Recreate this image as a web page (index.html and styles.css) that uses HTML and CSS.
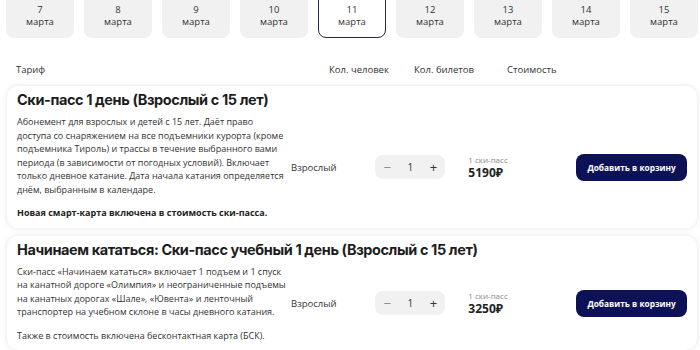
FILE: index.html
```html
<!DOCTYPE html>
<html lang="ru">
<head>
    <meta charset="UTF-8">
    <meta name="viewport" content="width=device-width, initial-scale=1.0">
    <title>Ски-пассы</title>
    <link rel="stylesheet" href="styles.css">
</head>
<body>
    <div class="page">
        <div class="dates">
            <div class="date"><span>7</span><span>марта</span></div>
            <div class="date"><span>8</span><span>марта</span></div>
            <div class="date"><span>9</span><span>марта</span></div>
            <div class="date"><span>10</span><span>марта</span></div>
            <div class="date active"><span>11</span><span>марта</span></div>
            <div class="date"><span>12</span><span>марта</span></div>
            <div class="date"><span>13</span><span>марта</span></div>
            <div class="date"><span>14</span><span>марта</span></div>
            <div class="date"><span>15</span><span>марта</span></div>
        </div>

        <div class="table-head">
            <span class="th-tariff">Тариф</span>
            <span class="th-people">Кол. человек</span>
            <span class="th-tickets">Кол. билетов</span>
            <span class="th-price">Стоимость</span>
        </div>

        <div class="tariff">
            <h2>Ски-пасс 1 день (Взрослый с 15 лет)</h2>
            <div class="tariff-body">
                <div class="desc">
                    <p>Абонемент для взрослых и детей с 15 лет. Даёт право<br>
                    доступа со снаряжением на все подъемники курорта (кроме<br>
                    подъемника Тироль) и трассы в течение выбранного вами<br>
                    периода (в зависимости от погодных условий). Включает<br>
                    только дневное катание. Дата начала катания определяется<br>
                    днём, выбранным в календаре.</p>
                    <p class="note">Новая смарт-карта включена в стоимость ски-пасса.</p>
                </div>
                <div class="person">Взрослый</div>
                <div class="counter">
                    <span class="minus">&minus;</span>
                    <span class="num">1</span>
                    <span class="plus">+</span>
                </div>
                <div class="price">
                    <span class="price-label">1 ски-пасс</span>
                    <span class="price-value">5190₽</span>
                </div>
                <button class="add-btn">Добавить в корзину</button>
            </div>
        </div>

        <div class="tariff">
            <h2>Начинаем кататься: Ски-пасс учебный 1 день (Взрослый с 15 лет)</h2>
            <div class="tariff-body">
                <div class="desc">
                    <p>Ски-пасс «Начинаем кататься» включает 1 подъем и 1 спуск<br>
                    на канатной дороге «Олимпия» и неограниченные подъемы<br>
                    на канатных дорогах «Шале», «Ювента» и ленточный<br>
                    транспортер на учебном склоне в часы дневного катания.</p>
                    <p>Также в стоимость включена бесконтактная карта (БСК).</p>
                </div>
                <div class="person">Взрослый</div>
                <div class="counter">
                    <span class="minus">&minus;</span>
                    <span class="num">1</span>
                    <span class="plus">+</span>
                </div>
                <div class="price">
                    <span class="price-label">1 ски-пасс</span>
                    <span class="price-value">3250₽</span>
                </div>
                <button class="add-btn">Добавить в корзину</button>
            </div>
        </div>
    </div>
</body>
</html>
```

FILE: styles.css
```css
body {
    margin: 0;
    font-family: 'Open Sans', 'Noto Sans', Arial, sans-serif;
    background-color: #fff;
    color: #2b2b2b;
    overflow: hidden;
}

.page {
    padding: 0 2px 0 6px;
    margin-top: -10px;
}

/* Date tabs */
.dates {
    display: flex;
    gap: 10px;
}

.date {
    width: 68px;
    height: 48px;
    box-sizing: border-box;
    padding-top: 14px;
    background-color: #f1f1f1;
    border-radius: 8px;
    display: flex;
    flex-direction: column;
    align-items: center;
    font-size: 9.5px;
    line-height: 12px;
    color: #333;
}

.date.active {
    background-color: #fff;
    border: 1px solid #232850;
    padding-top: 13px;
}

/* Table header */
.table-head {
    position: relative;
    height: 47px;
    font-size: 9.5px;
    color: #333;
}

.table-head span {
    position: absolute;
    top: 25px;
}

.th-tariff { left: 10px; }
.th-people { left: 323px; }
.th-tickets { left: 408px; }
.th-price { left: 501px; }

/* Tariff card */
.tariff {
    border-radius: 12px;
    box-shadow: 0 0 4px rgba(0, 0, 0, 0.08);
    border: 1px solid #f3f3f3;
    padding: 5px 10px 8px;
    margin-bottom: 6px;
}

.tariff h2 {
    margin: 0 0 6px;
    font-family: 'Inter', sans-serif;
    font-size: 14.5px;
    line-height: 18px;
    font-weight: 700;
    color: #1d1d1d;
    letter-spacing: -0.4px;
}

.tariff-body {
    display: flex;
    align-items: center;
}

.desc {
    width: 277px;
    font-size: 9px;
    line-height: 13.5px;
    color: #333;
    white-space: nowrap;
}

.desc p {
    margin: 0 0 10px;
}

.desc p:last-child {
    margin-bottom: 0;
}

.desc .note {
    font-weight: bold;
    color: #222;
}

.person {
    width: 85px;
    font-size: 9.5px;
    color: #333;
}

.counter {
    width: 71px;
    height: 24px;
    background-color: #f1f1f1;
    border-radius: 8px;
    display: flex;
    align-items: center;
    justify-content: space-around;
    font-size: 10px;
    color: #333;
    margin-right: 23px;
}

.counter .minus,
.counter .plus {
    font-size: 13px;
}

.counter .minus {
    color: #888;
}

.price {
    display: flex;
    flex-direction: column;
    width: 109px;
}

.price-label {
    font-size: 8px;
    color: #888;
    line-height: 11px;
}

.price-value {
    font-size: 12px;
    font-weight: bold;
    color: #222;
    line-height: 15px;
}

.add-btn {
    width: 112px;
    height: 27px;
    border: none;
    border-radius: 8px;
    background-color: #0d1256;
    color: #fff;
    font-family: 'Open Sans', sans-serif;
    font-size: 8.3px;
    font-weight: bold;
    padding: 0;
}
```
